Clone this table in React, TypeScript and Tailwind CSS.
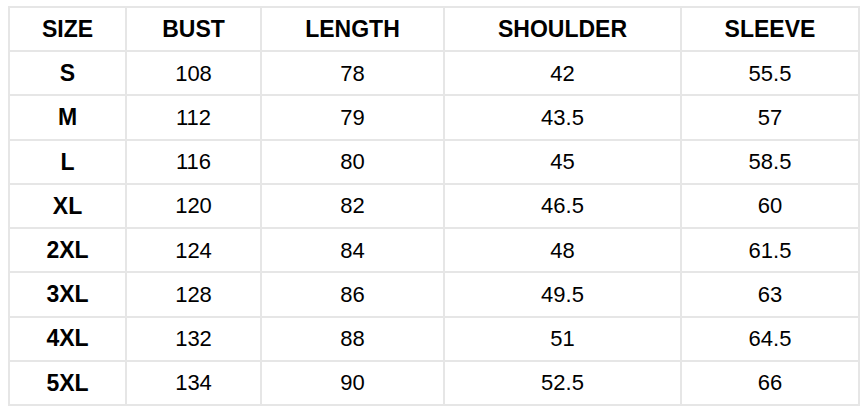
import React from 'react';

const headers = ['SIZE', 'BUST', 'LENGTH', 'SHOULDER', 'SLEEVE'];

const rows = [
  ['S', '108', '78', '42', '55.5'],
  ['M', '112', '79', '43.5', '57'],
  ['L', '116', '80', '45', '58.5'],
  ['XL', '120', '82', '46.5', '60'],
  ['2XL', '124', '84', '48', '61.5'],
  ['3XL', '128', '86', '49.5', '63'],
  ['4XL', '132', '88', '51', '64.5'],
  ['5XL', '134', '90', '52.5', '66'],
];

export default function App() {
  return (
    <div className="w-[867px] h-[414px] bg-white pt-[6px] pl-[8px] font-['Liberation_Sans',Arial,sans-serif] text-black">
      <div className="grid w-fit h-[400px] grid-cols-[115px_133px_181px_235px_176px] grid-rows-9 gap-[2px] p-[2px] bg-[#e6e6e6]">
        {headers.map((h) => (
          <div key={h} className="bg-white flex items-center justify-center text-[23px] font-bold">
            {h}
          </div>
        ))}
        {rows.map((row) =>
          row.map((cell, i) => (
            <div
              key={row[0] + i}
              className={`bg-white flex items-center justify-center ${i === 0 ? 'text-[23px] font-bold' : 'text-[22px]'}`}
            >
              {cell}
            </div>
          ))
        )}
      </div>
    </div>
  );
}
